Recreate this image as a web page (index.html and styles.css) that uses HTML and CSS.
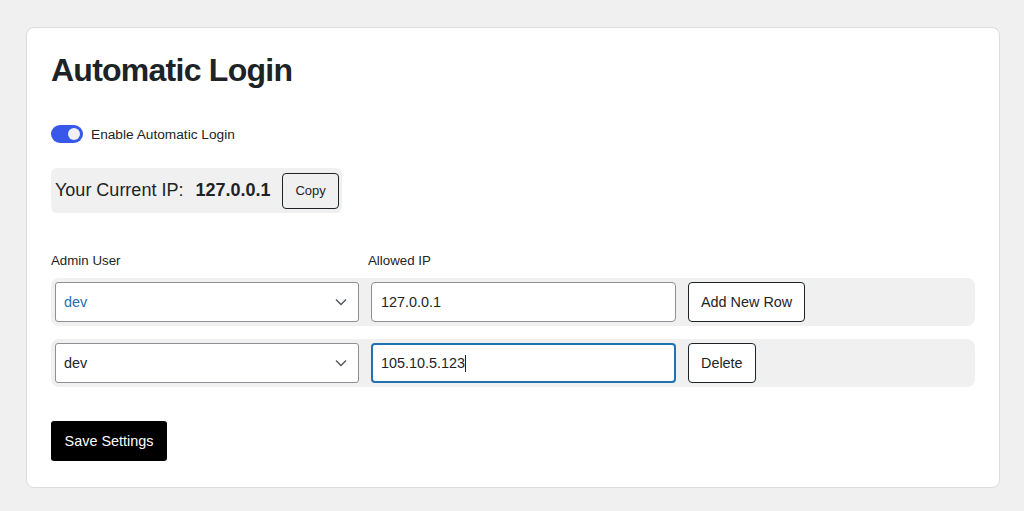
FILE: index.html
```html
<!DOCTYPE html>
<html>
<head>
<meta charset="utf-8">
<link rel="stylesheet" href="styles.css">
</head>
<body>
<div class="card">
  <h1 class="title">Automatic Login</h1>
  <div class="toggle-row">
    <span class="toggle"><span class="knob"></span></span>
    <span class="toggle-label">Enable Automatic Login</span>
  </div>
  <div class="ip-box">
    <span class="ip-label">Your Current IP:</span>
    <span class="ip-value">127.0.0.1</span>
    <button class="btn copy">Copy</button>
  </div>
  <div class="labels">
    <span class="lab lab-user">Admin User</span>
    <span class="lab">Allowed IP</span>
  </div>
  <div class="row">
    <div class="select"><span class="sel-text blue">dev</span><svg class="chev" width="12" height="8" viewBox="0 0 12 8"><path d="M1 1.5l5 5 5-5" fill="none" stroke="#50575e" stroke-width="1.4"/></svg></div>
    <div class="input">127.0.0.1</div>
    <button class="btn">Add New Row</button>
  </div>
  <div class="row">
    <div class="select"><span class="sel-text">dev</span><svg class="chev" width="12" height="8" viewBox="0 0 12 8"><path d="M1 1.5l5 5 5-5" fill="none" stroke="#50575e" stroke-width="1.4"/></svg></div>
    <div class="input focus">105.10.5.123<span class="caret"></span></div>
    <button class="btn">Delete</button>
  </div>
  <button class="save">Save Settings</button>
</div>
</body>
</html>
```
FILE: styles.css
```css
* { box-sizing: border-box; }
html, body { margin: 0; padding: 0; }
body {
  background: #f0f0f0;
  font-family: "Liberation Sans", Arial, sans-serif;
  color: #1d2327;
  padding: 27px 24px 0 26px;
}
.card {
  background: #fff;
  border: 1px solid #dcdcde;
  border-radius: 8px;
  height: 461px;
  padding: 0 24px 0 24px;
}
.title {
  margin: 0;
  padding-top: 22px;
  font-size: 32px;
  line-height: 40px;
  font-weight: 700;
  letter-spacing: -0.75px;
  color: #1d2327;
}
.toggle-row {
  display: flex;
  align-items: center;
  margin-top: 35px;
  height: 18px;
}
.toggle {
  width: 32px;
  height: 18px;
  border-radius: 9px;
  background: #3858e9;
  display: flex;
  align-items: center;
  justify-content: flex-end;
  padding-right: 3px;
}
.knob {
  width: 12px; height: 12px; border-radius: 50%; background: #f0f0f0;
}
.toggle-label { margin-left: 8px; font-size: 13.7px; color: #1d2327; }
.ip-box {
  display: inline-flex;
  align-items: center;
  background: #f0f0f0;
  border-radius: 6px;
  margin-top: 25px;
  height: 45px;
  padding: 0 3px 0 4px;
}
.ip-label { font-size: 18px; color: #1d2327; }
.ip-value { font-size: 18px; font-weight: 700; margin-left: 12px; color: #1d2327; }
.btn {
  font-family: inherit;
  background: #fff;
  border: 1px solid #1d2327;
  border-radius: 4px;
  color: #1d2327;
  font-size: 14.4px;
  height: 40px;
  padding: 0 12px;
}
.copy { height: 36px; font-size: 13px; padding: 0 12px; margin-left: 12px; background: transparent; }
.labels { display: flex; margin-top: 40px; font-size: 13.3px; height: 16px; }
.lab-user { width: 317px; }
.row {
  display: flex;
  align-items: center;
  gap: 12px;
  background: #f0f0f0;
  border-radius: 8px;
  padding: 4px;
  width: 924px;
  margin-top: 9px;
}
.row + .row { margin-top: 13px; }
.select {
  width: 304px; height: 40px;
  border: 1px solid #8c8f94;
  border-radius: 3px;
  background: #fff;
  display: flex; align-items: center; justify-content: space-between;
  padding: 0 11px 0 8px;
  font-size: 14.4px;
}
.sel-text { color: #1d2327; }
.sel-text.blue { color: #2271b1; }
.input {
  width: 305px; height: 40px;
  border: 1px solid #8c8f94;
  border-radius: 4px;
  background: #fff;
  display: flex; align-items: center;
  padding: 0 9px;
  font-size: 14.4px;
  color: #1d2327;
}
.input.focus { border: 2px solid #2271b1; padding-left: 8px; }
.caret { display: inline-block; width: 1px; height: 17px; background: #1d2327; }
.save {
  margin-top: 34px;
  background: #000;
  color: #fff;
  border: none;
  border-radius: 3px;
  height: 40px;
  width: 116px;
  font-family: inherit;
  font-size: 14.4px;
}
```
